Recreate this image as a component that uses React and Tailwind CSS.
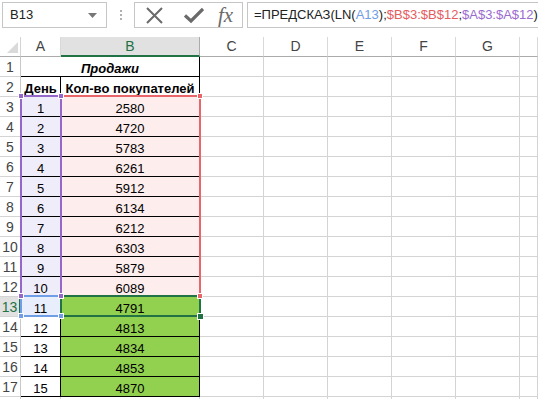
import React from "react";

const days = [
  [1, 2580], [2, 4720], [3, 5783], [4, 6261], [5, 5912],
  [6, 6134], [7, 6212], [8, 6303], [9, 5879], [10, 6089],
  [11, 4791], [12, 4813], [13, 4834], [14, 4853], [15, 4870],
];

const letters = ["A", "B", "C", "D", "E", "F", "G", ""];

function Handle({ x, y, color, size = 5 }) {
  return (
    <div
      className="absolute border border-white"
      style={{ left: x - size / 2, top: y - size / 2, width: size, height: size, background: color }}
    />
  );
}

function FormulaBar() {
  return (
    <div className="h-[37px] flex items-start pt-[2px] pl-[2px] bg-white">
      <div className="w-[105px] h-[26px] border border-[#c6c6c6] flex items-center justify-between pl-[7px] pr-[9px] text-[13px] text-[#222]">
        <span>B13</span>
        <svg width="9" height="5" viewBox="0 0 9 5">
          <path d="M0 0h9L4.5 5z" fill="#777" />
        </svg>
      </div>
      <div className="w-[27px] h-[26px] flex flex-col items-center justify-center gap-[2px]">
        <span className="w-[2px] h-[2px] bg-[#b0b0b0]" />
        <span className="w-[2px] h-[2px] bg-[#b0b0b0]" />
        <span className="w-[2px] h-[2px] bg-[#b0b0b0]" />
      </div>
      <div className="w-[109px] h-[26px] border border-[#c6c6c6] flex items-center">
        <svg className="ml-[10px]" width="19" height="19" viewBox="0 0 19 19">
          <path d="M2 2L17 17M17 2L2 17" stroke="#6a6a6a" strokeWidth="2" />
        </svg>
        <svg className="ml-[20px]" width="20" height="18" viewBox="0 0 20 18">
          <path d="M1 9.5L7 15L19 3" stroke="#6a6a6a" strokeWidth="3.2" fill="none" />
        </svg>
        <span className="ml-[14px] text-[21px] italic text-[#6a6a6a] leading-none font-['Liberation_Serif',serif]">fx</span>
      </div>
      <div className="ml-[4px] flex-1 h-[26px] border border-r-0 border-[#c6c6c6] flex items-center pl-[6px] text-[13px] text-[#222] whitespace-nowrap overflow-hidden">
        <span>=ПРЕДСКАЗ(LN(</span>
        <span className="text-[#6f9de6]">A13</span>
        <span>);</span>
        <span className="text-[#e55b5e]">$B$3:$B$12</span>
        <span>;</span>
        <span className="text-[#9a6bd0]">$A$3:$A$12</span>
        <span>)</span>
      </div>
    </div>
  );
}

export default function App() {
  const rows = [];
  for (let r = 1; r <= 18; r++) rows.push(r);

  const cell = "border-r border-b flex items-end justify-center pb-[1px] leading-none whitespace-nowrap";

  return (
    <div className="w-[538px] h-[399px] overflow-hidden bg-white font-['Liberation_Sans',Arial,sans-serif]">
      <FormulaBar />
      <div className="relative grid grid-cols-[21px_40px_139px_64px_64px_64px_64px_64px_1fr] auto-rows-[20px] text-[13px] text-black">
        {/* header row */}
        <div className="border-r border-b border-r-[#d4d4d4] border-b-[#ababab] relative">
          <svg className="absolute left-[7px] top-[5px]" width="11" height="11" viewBox="0 0 11 11">
            <path d="M11 0V11H0z" fill="#dadada" />
          </svg>
        </div>
        {letters.map((l) =>
          l === "B" ? (
            <div key={l} className="bg-[#e1e1e1] border-r border-r-[#ababab] border-b-2 border-b-[#217346] flex items-center justify-center text-[14px] text-[#217346]">
              B
            </div>
          ) : (
            <div key={l || "h"} className="border-r border-b border-r-[#d9d9d9] border-b-[#ababab] flex items-center justify-center text-[14px] text-[#444]">
              {l}
            </div>
          )
        )}

        {rows.map((r) => {
          const out = [];
          const sel = r === 13;
          out.push(
            <div
              key={`h${r}`}
              className={
                sel
                  ? "bg-[#e1e1e1] border-r-2 border-r-[#217346] border-b border-b-[#d4d4d4] flex items-end justify-center pb-[2px] text-[14px] leading-none text-[#217346]"
                  : "border-r border-b border-r-[#c8c8c8] border-b-[#d4d4d4] flex items-end justify-center pb-[2px] text-[14px] leading-none text-[#444]"
              }
            >
              {r < 18 ? r : ""}
            </div>
          );
          if (r === 1) {
            out.push(
              <div key="a1" className={`${cell} col-span-2 border-black font-bold italic`}>
                Продажи
              </div>
            );
          } else if (r === 2) {
            out.push(
              <div key="a2" className={`${cell} border-black font-bold`}>День</div>,
              <div key="b2" className={`${cell} border-black font-bold`}>Кол-во покупателей</div>
            );
          } else if (r <= 17) {
            const [d, v] = days[r - 3];
            const aBg = r <= 12 ? "bg-[#efedf9]" : r === 13 ? "bg-[#e8eefb]" : "bg-white";
            const bBg = r <= 12 ? "bg-[#fdeded]" : "bg-[#92d050]";
            out.push(
              <div key={`a${r}`} className={`${cell} border-black ${aBg}`}>{d}</div>,
              <div key={`b${r}`} className={`${cell} border-black ${bBg}`}>{v}</div>
            );
          } else {
            out.push(
              <div key={`a${r}`} className={`${cell} border-[#d4d4d4]`} />,
              <div key={`b${r}`} className={`${cell} border-[#d4d4d4]`} />
            );
          }
          for (let c = 0; c < 6; c++) {
            out.push(<div key={`x${r}-${c}`} className={`${cell} border-[#d4d4d4]`} />);
          }
          return out;
        })}

        {/* reference highlights */}
        <div className="absolute left-[60px] top-[58px] w-[141px] h-[202px] border-2 border-[#e8666a]" />
        <div className="absolute left-[20px] top-[58px] w-[42px] h-[202px] border-2 border-[#9467c9]" />
        <div className="absolute left-[20px] top-[258px] w-[42px] h-[22px] border-2 border-[#6f9de6]" />
        <div className="absolute left-[60px] top-[258px] w-[141px] h-[22px] border-2 border-[#217346]" />

        <Handle x={200} y={59} color="#e8666a" size={6} />
        <Handle x={200} y={259} color="#e8666a" size={6} />
        <Handle x={21} y={59} color="#9467c9" size={6} />
        <Handle x={61} y={59} color="#9467c9" size={6} />
        <Handle x={21} y={259} color="#9467c9" size={6} />
        <Handle x={61} y={259} color="#9467c9" size={6} />
        <Handle x={21} y={279} color="#6f9de6" size={6} />
        <Handle x={61} y={279} color="#6f9de6" size={6} />
        <Handle x={200} y={279} color="#217346" size={7} />
      </div>
    </div>
  );
}
